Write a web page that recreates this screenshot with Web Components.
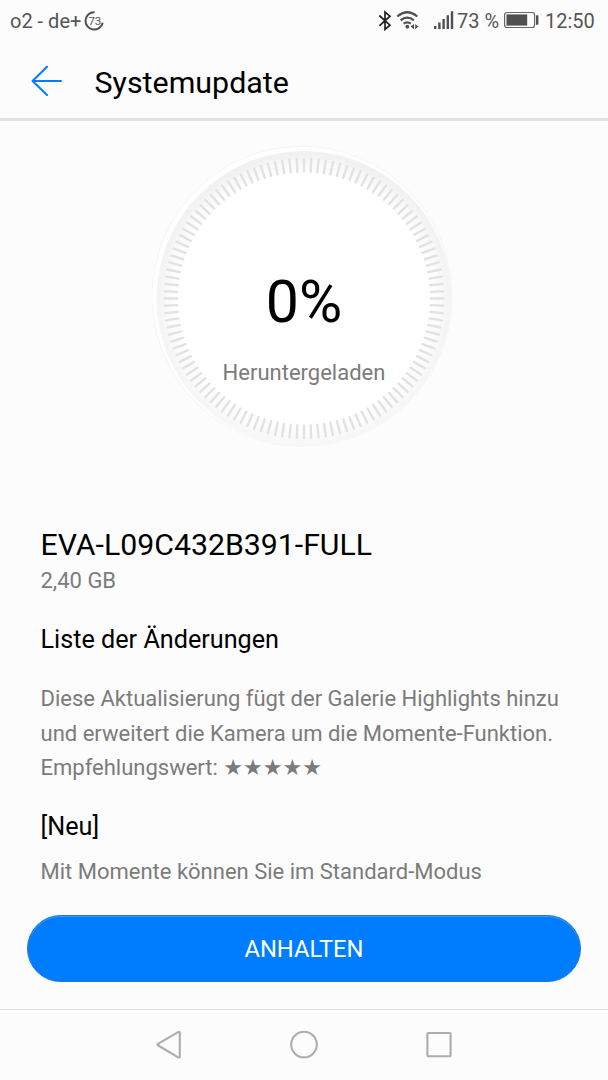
<!DOCTYPE html>
<html lang="de">
<head>
<meta charset="utf-8">
<title>Systemupdate</title>
<style>
  html,
  body {
    margin: 0;
    height: 100%;
    overflow: hidden;
    background: #fcfcfc;
  }

  body {
    font-family: Roboto, 'Liberation Sans', sans-serif;
    color: #000;
  }
</style>
</head>
<body>
<update-screen></update-screen>

<script>
class StatusBar extends HTMLElement {
  constructor() {
    super();
    this.attachShadow({ mode: 'open' });
    this.shadowRoot.innerHTML = `
      <style>
        :host {
          display: flex;
          align-items: center;
          height: 42px;
          box-sizing: border-box;
          padding: 0 13px 0 10px;
          color: #555;
          font-size: 20px;
          line-height: 42px;
          white-space: nowrap;
        }

        svg {
          display: block;
          flex: none;
        }

        .spacer {
          flex: 1;
        }

        .carrier {
          width: 73px;
        }

        .percent {
          width: 47px;
          line-height: 40px;
        }

        .clock {
          width: 50px;
        }
      </style>
      <span class="carrier">${this.getAttribute('carrier')}</span>
      <svg width="22" height="42" viewBox="83 0 22 42">
        <path d="M94.6 12.2A8.7 8.7 0 1 0 102.7 22.8" fill="none" stroke="#505050" stroke-width="2"/>
        <text x="88.4" y="25" font-size="11.5" fill="#555">73</text>
      </svg>
      <span class="spacer"></span>
      <svg width="79" height="42" viewBox="378 0 79 42" fill="none" stroke="#505050">
        <path d="M379.3 15.5L390 25.2L385 29.5V12L390 16.2L379.3 25.8" stroke="#222" stroke-width="1.7"/>
        <g stroke-width="2.2">
          <path d="M397.3 16.5Q407.3 8 417.3 16.5"/>
          <path d="M400.6 20.3Q407.3 14.8 413.8 20.3"/>
          <path d="M403.6 23.7Q407.3 21 410.8 23.7"/>
        </g>
        <circle cx="407.3" cy="26.7" r="1.9" fill="#505050" stroke="none"/>
        <path d="M414 24V29.2L410.6 26.5ZM415.2 24V29.2L418.4 26.5Z" fill="#505050" stroke="none"/>
        <path d="M435.2 26V29M439.4 22.5V29M443.6 19V29M447.8 15.2V29M452 11.2V29" stroke-width="2.4"/>
      </svg>
      <span class="percent">${this.getAttribute('charge')}</span>
      <svg width="41" height="42" viewBox="504 0 41 42">
        <rect x="504.6" y="12.5" width="30" height="15" rx="2.5" fill="none" stroke="#666" stroke-width="1.2"/>
        <rect x="506.5" y="14.4" width="20.7" height="11.2" fill="#505050"/>
        <rect x="536" y="15.2" width="2.4" height="9.6" rx=".5" fill="#505050"/>
      </svg>
      <span class="clock">${this.getAttribute('time')}</span>
    `;
  }
}

class AppHeader extends HTMLElement {
  constructor() {
    super();
    this.attachShadow({ mode: 'open' });
    this.shadowRoot.innerHTML = `
      <style>
        :host {
          display: flex;
          align-items: center;
          height: 79px;
          box-sizing: border-box;
          padding-left: 30px;
          border-bottom: 3px solid #e2e2e2;
        }

        svg {
          margin-right: 30.5px;
        }

        h1 {
          margin: 0;
          padding-top: 5px;
          font-size: 30.4px;
          font-weight: 400;
          line-height: 36px;
        }
      </style>
      <svg width="34" height="32" viewBox="0 0 34 32" fill="none" stroke="#007dff" stroke-width="2" stroke-linecap="round" stroke-linejoin="round">
        <path d="M31 17H2.5M17 2.7L2.5 17L17 31"/>
      </svg>
      <h1><slot></slot></h1>
    `;
  }
}

class ProgressDial extends HTMLElement {
  constructor() {
    super();
    this.attachShadow({ mode: 'open' });
    this.shadowRoot.innerHTML = `
      <style>
        :host {
          display: grid;
          width: 304px;
          height: 304px;
          margin: 0 auto;
        }

        svg,
        .label {
          grid-area: 1 / 1;
        }

        .label {
          display: flex;
          flex-direction: column;
          align-items: center;
          padding-top: 122px;
        }

        .value {
          font-size: 59px;
          line-height: 70px;
        }

        .text {
          margin-top: 22px;
          font-size: 22px;
          line-height: 28px;
          color: #7b7b7b;
        }
      </style>
      <svg width="304" height="304" viewBox="0 0 304 304">
        <defs>
          <radialGradient id="rim" gradientUnits="userSpaceOnUse" cx="152" cy="153.5" r="147.5">
            <stop offset=".84" stop-color="#fff"/>
            <stop offset=".93" stop-color="#f8f8f8"/>
            <stop offset=".98" stop-color="#f0f0f0"/>
            <stop offset="1" stop-color="#f2f2f2"/>
          </radialGradient>
          <linearGradient id="fade" x2="0" y2="1">
            <stop offset="0" stop-color="#fff" stop-opacity="0"/>
            <stop offset="1" stop-color="#fff" stop-opacity=".5"/>
          </linearGradient>
        </defs>
        <circle cx="150" cy="151.3" r="150" fill="#fff" stroke="#f5f5f5"/>
        <circle cx="152" cy="153.5" r="147.5" fill="url(#rim)"/>
        <circle cx="152" cy="153.5" r="147.5" fill="url(#fade)"/>
        <g stroke="#e2e2e2" stroke-width="2.4" stroke-linecap="round">${this._ticks()}</g>
      </svg>
      <div class="label">
        <span class="value">${this.getAttribute('value')}%</span>
        <span class="text"><slot></slot></span>
      </div>
    `;
  }

  _ticks() {
    let lines = '';
    for (let i = 0; i < 120; i++) {
      lines += `<path d="M152 14V26.5" transform="rotate(${i * 3} 152 153.5)"/>`;
    }
    return lines;
  }
}

class ChangeLog extends HTMLElement {
  constructor() {
    super();
    this.attachShadow({ mode: 'open' });
    this.shadowRoot.innerHTML = `
      <style>
        :host {
          display: block;
          padding: 77px 0 0 40.5px;
          color: #7b7b7b;
          font-size: 22px;
          white-space: nowrap;
        }

        h2,
        h3,
        p {
          margin: 0;
          font-weight: 400;
        }

        h2,
        h3 {
          color: #000;
        }

        h2 {
          margin-bottom: 2px;
          font-size: 30.25px;
          line-height: 37px;
        }

        h3 {
          font-size: 25.2px;
          line-height: 32px;
        }

        .size {
          margin-bottom: 27px;
          line-height: 32px;
        }

        .intro {
          margin: 26px 0 25px;
          line-height: 34.5px;
        }

        .more {
          margin-top: 13px;
          line-height: 32px;
        }

        .star {
          font-family: 'DejaVu Sans', sans-serif;
          font-size: 22px;
          line-height: 1;
        }
      </style>
      <h2>EVA-L09C432B391-FULL</h2>
      <p class="size">2,40 GB</p>
      <h3>Liste der Änderungen</h3>
      <p class="intro">Diese Aktualisierung fügt der Galerie Highlights hinzu<br>und erweitert die Kamera um die Momente-Funktion.<br>Empfehlungswert: <span class="star">★★★★★</span></p>
      <h3>[Neu]</h3>
      <p class="more">Mit Momente können Sie im Standard-Modus</p>
    `;
  }
}

class PillButton extends HTMLElement {
  constructor() {
    super();
    this.attachShadow({ mode: 'open' });
    this.shadowRoot.innerHTML = `
      <style>
        :host {
          display: block;
          margin: 0 27px 27px;
        }

        button {
          display: block;
          width: 100%;
          height: 67px;
          padding: 1px 0 0;
          border: 1px solid #1f78d2;
          border-radius: 34px;
          background: #007dff;
          box-shadow: inset 0 1px 0 #3b9aff;
          color: #fff;
          font: 23.7px Roboto, 'Liberation Sans', sans-serif;
        }
      </style>
      <button><slot></slot></button>
    `;
  }
}

class NavBar extends HTMLElement {
  constructor() {
    super();
    this.attachShadow({ mode: 'open' });
    this.shadowRoot.innerHTML = `
      <style>
        :host {
          display: flex;
          justify-content: center;
          align-items: center;
          gap: 103px;
          height: 71px;
          box-sizing: border-box;
          border-top: 1px solid #e0e0e0;
        }

        svg {
          width: 32px;
          height: 32px;
          fill: none;
          stroke: #adadad;
          stroke-width: 2.1;
          stroke-linejoin: round;
        }
      </style>
      <svg viewBox="0 0 32 32"><path d="M5.3 14.7Q3.7 15.6 5.3 16.5L25.2 28.3Q26.8 29.1 26.8 27.5V3.9Q26.8 2.3 25.2 3.1Z"/></svg>
      <svg viewBox="0 0 32 32"><circle cx="16" cy="15.6" r="12.8"/></svg>
      <svg viewBox="0 0 32 32"><rect x="4.4" y="4" width="23.2" height="23.2" rx="1"/></svg>
    `;
  }
}

class UpdateScreen extends HTMLElement {
  constructor() {
    super();
    this.attachShadow({ mode: 'open' });
    this.shadowRoot.innerHTML = `
      <style>
        :host {
          display: flex;
          flex-direction: column;
          width: 608px;
          height: 1080px;
        }

        main {
          flex: 1;
          min-height: 0;
          padding-top: 24px;
          overflow: hidden;
        }
      </style>
      <status-bar carrier="o2 - de+" charge="73 %" time="12:50"></status-bar>
      <app-header>Systemupdate</app-header>
      <main>
        <progress-dial value="0">Heruntergeladen</progress-dial>
        <change-log></change-log>
      </main>
      <pill-button>ANHALTEN</pill-button>
      <nav-bar></nav-bar>
    `;
  }
}

customElements.define('status-bar', StatusBar);
customElements.define('app-header', AppHeader);
customElements.define('progress-dial', ProgressDial);
customElements.define('change-log', ChangeLog);
customElements.define('pill-button', PillButton);
customElements.define('nav-bar', NavBar);
customElements.define('update-screen', UpdateScreen);
</script>
</body>
</html>
